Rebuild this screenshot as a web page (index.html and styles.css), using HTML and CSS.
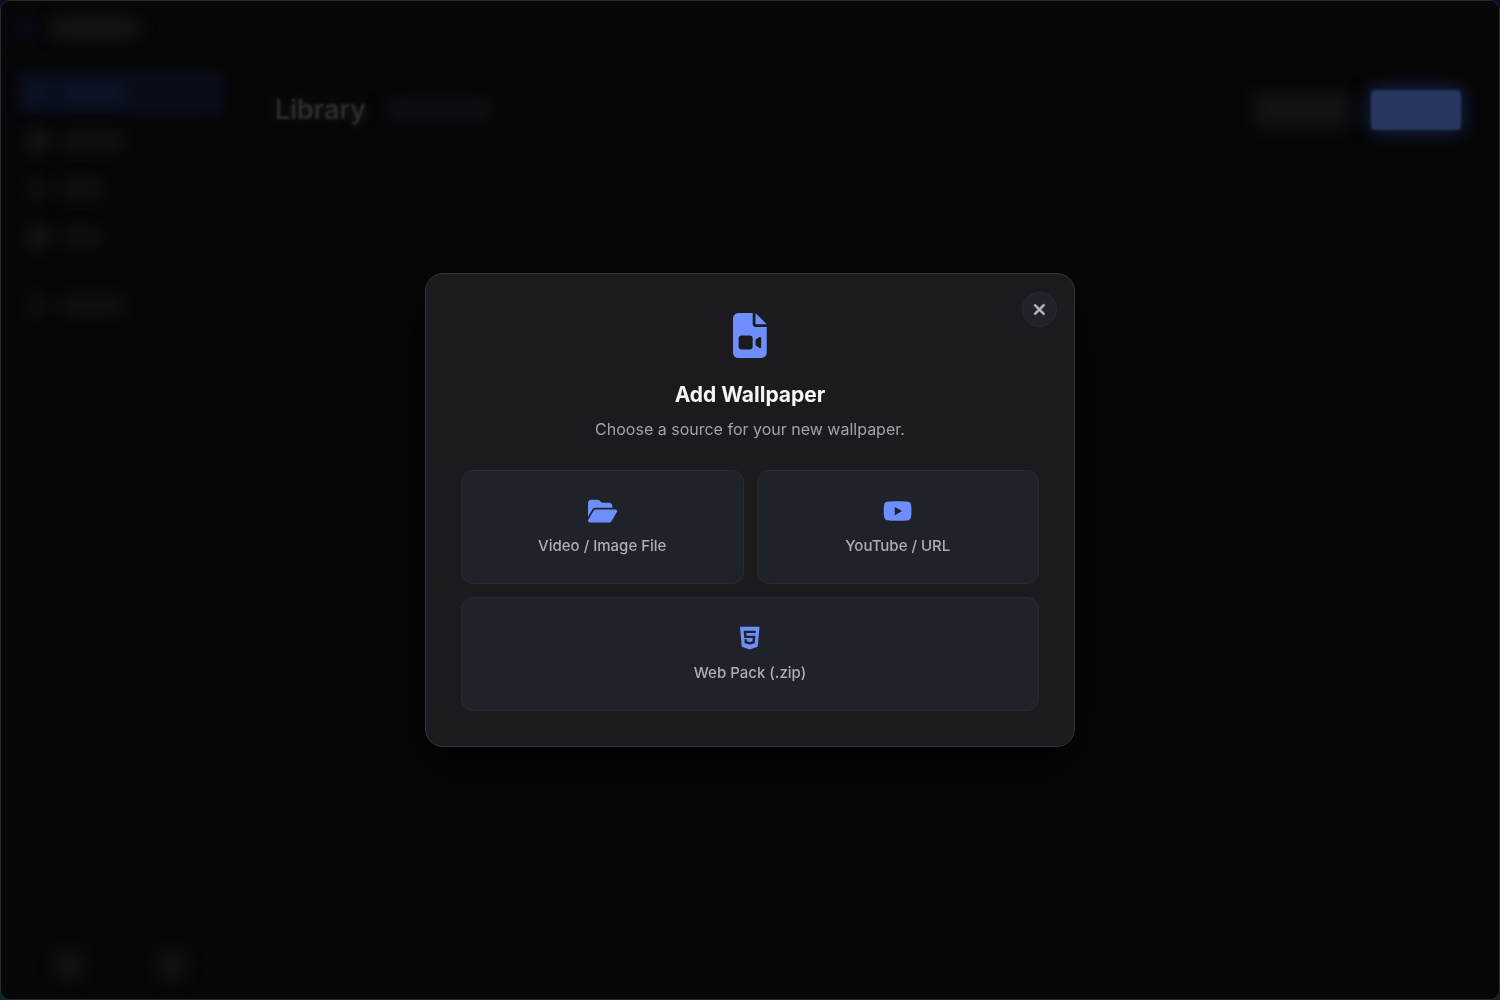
FILE: index.html
```html
<!DOCTYPE html>
<html lang="en">
<head>
    <meta charset="UTF-8">
    <meta name="viewport" content="width=device-width, initial-scale=1.0">
    <title>Add Wallpaper</title>
    <link rel="stylesheet" href="styles.css">
</head>
<body>
    <div class="app">
        <header class="titlebar" aria-hidden="true">
            <span class="smudge logo"></span>
            <span class="smudge brand"></span>
        </header>
        <div class="layout">
            <aside class="sidebar" aria-hidden="true">
                <div class="nav-item active"><span class="smudge dot"></span><span class="smudge label"></span></div>
                <div class="nav-item"><span class="smudge dot"></span><span class="smudge label"></span></div>
                <div class="nav-item"><span class="smudge dot faint"></span><span class="smudge label short"></span></div>
                <div class="nav-item"><span class="smudge dot"></span><span class="smudge label short faint"></span></div>
                <div class="nav-item settings"><span class="smudge dot faint"></span><span class="smudge label"></span></div>
                <div class="sidebar-footer">
                    <span class="smudge tool"></span>
                    <span class="smudge tool"></span>
                </div>
            </aside>
            <main class="content">
                <h1>Library</h1>
                <span class="smudge count"></span>
                <span class="smudge action"></span>
                <span class="smudge action primary"></span>
            </main>
        </div>
    </div>

    <div class="overlay">
        <section class="modal" role="dialog" aria-modal="true" aria-labelledby="modal-title">
            <button class="close" type="button" aria-label="Close">
                <svg viewBox="0 0 384 512"><path d="M342.6 150.6c12.5-12.5 12.5-32.8 0-45.3s-32.8-12.5-45.3 0L192 210.7 86.6 105.4c-12.5-12.5-32.8-12.5-45.3 0s-12.5 32.8 0 45.3L146.7 256 41.4 361.4c-12.5 12.5-12.5 32.8 0 45.3s32.8 12.5 45.3 0L192 301.3 297.4 406.6c12.5 12.5 32.8 12.5 45.3 0s12.5-32.8 0-45.3L237.3 256 342.6 150.6z"/></svg>
            </button>
            <svg class="modal-icon" viewBox="0 0 384 512"><path d="M64 0C28.7 0 0 28.7 0 64V448c0 35.3 28.7 64 64 64H320c35.3 0 64-28.7 64-64V160H256c-17.7 0-32-14.3-32-32V0H64zM256 0V128H384L256 0zM64 288c0-17.7 14.3-32 32-32h96c17.7 0 32 14.3 32 32v96c0 17.7-14.3 32-32 32H96c-17.7 0-32-14.3-32-32V288zM300.9 397.9L256 368V304l44.9-29.9c2-1.3 4.4-2.1 6.8-2.1c6.8 0 12.3 5.5 12.3 12.3V387.7c0 6.8-5.5 12.3-12.3 12.3c-2.4 0-4.8-.7-6.8-2.1z"/></svg>
            <h2 id="modal-title">Add Wallpaper</h2>
            <p>Choose a source for your new wallpaper.</p>
            <div class="options">
                <button class="option" type="button">
                    <svg viewBox="0 0 576 512"><path d="M88.7 223.8L0 375.8V96C0 60.7 28.7 32 64 32H181.5c17 0 33.3 6.7 45.3 18.7l26.5 26.5c12 12 28.3 18.7 45.3 18.7H416c35.3 0 64 28.7 64 64v32H144c-22.8 0-43.8 12.1-55.3 31.8zm27.6 16.1C122.1 230 132.6 224 144 224H544c11.5 0 22 6.1 27.7 16.1s5.7 22.2-.1 32.1l-112 192C453.9 474 443.4 480 432 480H32c-11.5 0-22-6.1-27.7-16.1s-5.7-22.2 .1-32.1l112-192z"/></svg>
                    <span>Video / Image File</span>
                </button>
                <button class="option" type="button">
                    <svg viewBox="0 0 576 512"><path d="M549.655 124.083c-6.281-23.65-24.787-42.276-48.284-48.597C458.781 64 288 64 288 64S117.22 64 74.629 75.486c-23.497 6.322-42.003 24.947-48.284 48.597-11.412 42.867-11.412 132.305-11.412 132.305s0 89.438 11.412 132.305c6.281 23.65 24.787 41.5 48.284 47.821C117.22 448 288 448 288 448s170.78 0 213.371-11.486c23.497-6.321 42.003-24.171 48.284-47.821 11.412-42.867 11.412-132.305 11.412-132.305s0-89.438-11.412-132.305zm-317.51 213.508V175.185l142.739 81.205-142.739 81.201z"/></svg>
                    <span>YouTube / URL</span>
                </button>
                <button class="option wide" type="button">
                    <svg viewBox="0 0 384 512"><path d="M0 32l34.9 395.8L191.5 480l157.6-52.2L384 32H0zm308.2 127.9H124.4l4.1 49.4h175.6l-13.6 148.4-97.9 27v.3h-1.1l-98.7-27.3-6-75.8h47.7L138 320l53.5 14.5 53.7-14.5 6-62.2H84.3L71.5 112.2h241.1l-4.4 47.7z"/></svg>
                    <span>Web Pack (.zip)</span>
                </button>
            </div>
        </section>
    </div>
</body>
</html>
```
FILE: styles.css
```css
:root {
    --accent: #6e8efb;
    --surface: #1b1b1f;
    --card: #20222a;
    --line: #2a2b31;
    --muted: #a2a2a8;
}
* {
    box-sizing: border-box;
}
body {
    margin: 0;
    background: linear-gradient(to top, #0a2a2a, #0c0c24 10%);
    color: #f5f5f7;
    font-family: Inter, "Open Sans", sans-serif;
    font-size: 16px;
}
button {
    font: inherit;
    cursor: pointer;
}
svg {
    display: block;
    fill: currentColor;
}

/* dimmed app behind the dialog */
.app {
    display: flex;
    flex-direction: column;
    height: 100vh;
    background: #060606;
    border: 1px solid #292932;
    border-radius: 10px;
    overflow: hidden;
}
.smudge {
    background: #121213;
    border-radius: 8px;
    filter: blur(8px);
}
.titlebar {
    display: flex;
    align-items: center;
    gap: 12px;
    height: 54px;
    padding: 0 16px;
    background: #070708;
}
.logo {
    width: 20px;
    height: 20px;
    background: #090a1c;
}
.brand {
    width: 92px;
    height: 16px;
    background: #171716;
}
.layout {
    display: flex;
    flex: 1;
}
.sidebar {
    display: flex;
    flex-direction: column;
    gap: 4px;
    width: 246px;
    padding: 16px 24px 16px 16px;
    background: linear-gradient(to right, #07070a 80%, #060606);
}
.nav-item {
    display: flex;
    align-items: center;
    gap: 10px;
    height: 44px;
    padding: 0 12px;
}
.active {
    background: #090d18;
    border-radius: 10px;
    filter: blur(5px);
}
.active .smudge {
    background: #0f1730;
}
.settings {
    margin-top: 20px;
}
.dot {
    width: 20px;
    height: 20px;
    background: #191919;
}
.label {
    width: 66px;
    height: 16px;
}
.short {
    width: 44px;
}
.faint {
    background: #101011;
}
.sidebar-footer {
    display: flex;
    justify-content: space-around;
    margin-top: auto;
    padding-bottom: 4px;
}
.tool {
    width: 28px;
    height: 28px;
}
.content {
    display: flex;
    flex: 1;
    align-items: center;
    align-self: flex-start;
    gap: 20px;
    padding: 35px 38px 35px 28px;
}
h1 {
    margin: 0;
    color: #303030;
    font-size: 27px;
    font-weight: 500;
    line-height: 40px;
    text-shadow: 0 0 14px #2a2a2a;
    filter: blur(1px);
}
.count {
    width: 108px;
    height: 26px;
    margin-right: auto;
    background: #0d0d14;
}
.action {
    width: 98px;
    height: 36px;
    background: #121217;
}
.primary {
    width: 90px;
    height: 40px;
    background: #273660;
    border-radius: 4px;
    box-shadow: 0 0 18px 2px #17244e;
    filter: blur(1px);
}

/* dialog */
.overlay {
    position: fixed;
    inset: 0;
    display: flex;
    align-items: center;
    justify-content: center;
    padding-top: 20px;
}
.modal {
    position: relative;
    display: flex;
    flex-direction: column;
    align-items: center;
    width: 100%;
    max-width: 650px;
    padding: 39px 35px 35px;
    background: var(--surface);
    border: 1px solid #333338;
    border-radius: 18px;
    box-shadow: 0 20px 50px rgba(0, 0, 0, 0.6);
    text-align: center;
}
.close {
    position: absolute;
    top: 18px;
    right: 17px;
    display: grid;
    place-items: center;
    width: 35px;
    height: 35px;
    padding: 0;
    background: var(--card);
    border: 1px solid var(--line);
    border-radius: 50%;
    color: #b4b5b9;
}
.close svg {
    height: 17px;
    stroke: currentColor;
    stroke-width: 16px;
}
.modal-icon {
    height: 45px;
    color: var(--accent);
}
h2 {
    margin: 21px 0 4px;
    font-size: 21px;
    font-weight: 700;
    line-height: 32px;
}
p {
    margin: 0 0 27px;
    color: var(--muted);
    line-height: 28px;
}
.options {
    display: grid;
    grid-template-columns: 1fr 1fr;
    gap: 13px;
    width: 100%;
}
.option {
    display: flex;
    flex-direction: column;
    align-items: center;
    gap: 10px;
    padding: 27px 20px 26px;
    background: var(--card);
    border: 1px solid var(--line);
    border-radius: 12px;
    color: #adadb3;
    font-size: 15px;
    font-weight: 500;
    line-height: 23px;
}
.option svg {
    height: 26px;
    color: var(--accent);
}
.wide {
    grid-column: span 2;
}
```
